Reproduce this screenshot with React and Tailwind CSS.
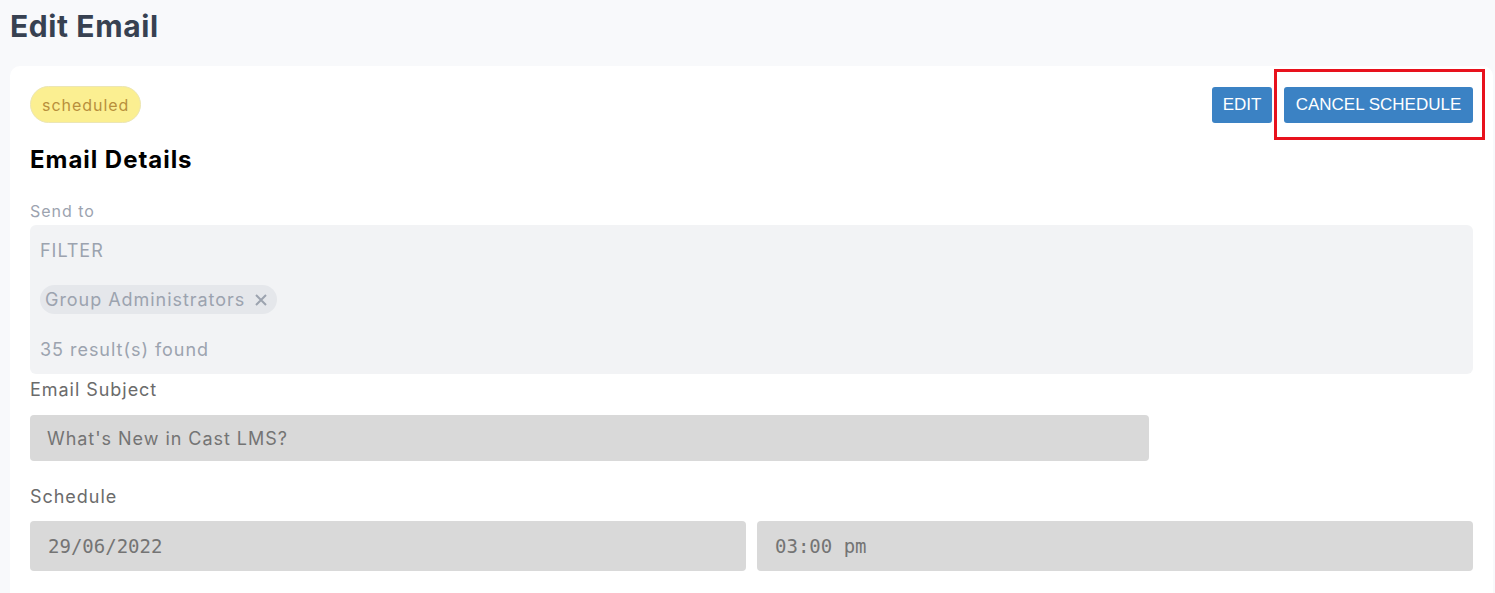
export default function App() {
  const sans = { fontFamily: "Inter, 'Noto Sans', sans-serif" };
  return (
    <div className="min-h-[593px] bg-[#f8f9fb] pt-[6px] tracking-[0.06em]" style={sans}>
      <h1 className="ml-[10px] text-[30px] font-bold leading-[40px] text-[#374151] tracking-[0.02em]">Edit Email</h1>
      <div className="ml-[10px] mt-[20px] w-[1483px] rounded-t-[10px] bg-white px-[20px] pt-[20px] pb-[30px]">
        <div className="flex items-start justify-between">
          <span className="mt-0 inline-flex h-[37px] items-center rounded-full border border-[#ece6b4] bg-[#fbef91] px-[11px] text-[16px] text-[#b88f3c]">scheduled</span>
          <div className="mt-[1px] flex gap-[12px] pr-0 tracking-normal">
            <button className="h-[36px] w-[60px] rounded-[3px] bg-[#3b82c4] text-[17px] text-white" style={{ fontFamily: "'Liberation Sans', Arial, sans-serif" }}>EDIT</button>
            <div className="relative">
              <button className="h-[36px] w-[189px] rounded-[3px] bg-[#3b82c4] text-[17px] text-white" style={{ fontFamily: "'Liberation Sans', Arial, sans-serif" }}>CANCEL SCHEDULE</button>
              <div className="pointer-events-none absolute left-[-10px] top-[-18px] h-[71px] w-[211px] border-[3px] border-[#e8121d]"></div>
            </div>
          </div>
        </div>
        <h2 className="mt-[22px] text-[24px] font-bold leading-[30px] text-black tracking-[0.04em]">Email Details</h2>
        <div className="mt-[26px] text-[16px] leading-[20px] text-[#9ca3af]">Send to</div>
        <div className="mt-[4px] h-[149px] rounded-[6px] bg-[#f2f3f5] px-[10px] pt-[14px] text-[18px] text-[#9ca3af]">
          <div className="leading-[24px]">FILTER</div>
          <div className="mt-[22px]">
            <span className="inline-flex h-[29px] items-center rounded-full bg-[#e5e7eb] pl-[5px] pr-[9px] leading-[24px]">
              Group Administrators
              <svg className="ml-[9px]" width="14" height="14" viewBox="0 0 14 14"><path d="M2 2 L12 12 M12 2 L2 12" stroke="#9ca3af" strokeWidth="2" /></svg>
            </span>
          </div>
          <div className="mt-[24px] leading-[24px]">35 result(s) found</div>
        </div>
        <div className="mt-[4px] text-[18px] leading-[24px] text-[#6b6b6b]">Email Subject</div>
        <div className="mt-[13px] flex h-[46px] w-[1119px] items-center rounded-[4px] bg-[#d9d9d9] px-[17px] text-[18px] text-[#747474]">What's New in Cast LMS?</div>
        <div className="mt-[24px] text-[18px] leading-[24px] text-[#6b6b6b]">Schedule</div>
        <div className="mt-[12px] grid grid-cols-2 gap-[11px] tracking-normal">
          <div className="flex h-[50px] items-center rounded-[4px] bg-[#d9d9d9] px-[18px] text-[19px] text-[#747474]" style={{ fontFamily: "'DejaVu Sans Mono', monospace" }}>29/06/2022</div>
          <div className="flex h-[50px] items-center rounded-[4px] bg-[#d9d9d9] px-[18px] text-[19px] text-[#747474]" style={{ fontFamily: "'DejaVu Sans Mono', monospace" }}>03:00 pm</div>
        </div>
      </div>
    </div>
  );
}
